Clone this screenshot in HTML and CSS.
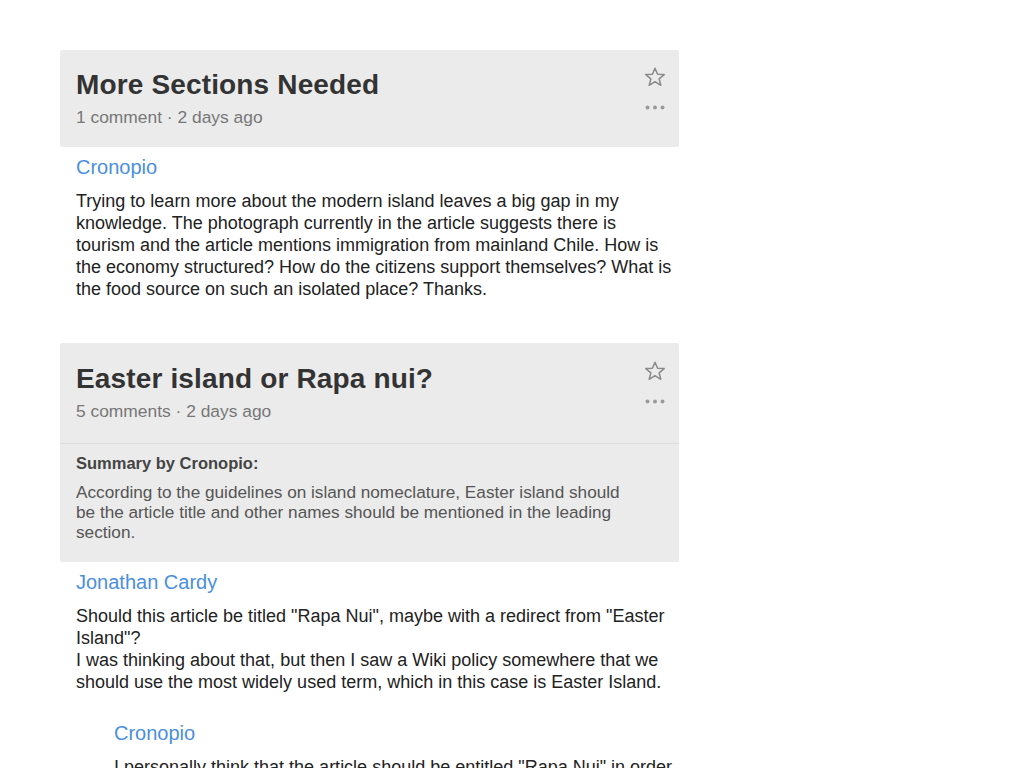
FILE: index.html
```html
<!DOCTYPE html>
<html>
<head>
<meta charset="utf-8">
<link rel="stylesheet" href="styles.css">
</head>
<body>
<main class="list">
  <section class="thread">
    <header class="thread-head">
      <div class="head-text">
        <h2 class="title">More Sections Needed</h2>
        <div class="meta">1 comment · 2 days ago</div>
      </div>
      <div class="actions">
        <svg class="star" width="22" height="20" viewBox="0 0 22 20"><path d="M11 1.2 L13.6 7.2 L20.2 7.6 L15.1 11.8 L16.8 18.3 L11 14.7 L5.2 18.3 L6.9 11.8 L1.8 7.6 L8.4 7.2 Z" fill="none" stroke="#8a8a8a" stroke-width="1.5" stroke-linejoin="round"/></svg>
        <svg class="dots" width="20" height="5" viewBox="0 0 20 5"><circle cx="2.5" cy="2.5" r="2" fill="#9a9a9a"/><circle cx="10" cy="2.5" r="2" fill="#9a9a9a"/><circle cx="17.5" cy="2.5" r="2" fill="#9a9a9a"/></svg>
      </div>
    </header>
    <article class="comment">
      <a class="author">Cronopio</a>
      <p class="body">Trying to learn more about the modern island leaves a big gap in my<br>knowledge. The photograph currently in the article suggests there is tourism and the article mentions immigration from mainland Chile. How is the economy structured? How do the citizens support themselves? What is the food source on such an isolated place? Thanks.</p>
    </article>
  </section>

  <section class="thread">
    <header class="thread-head has-summary">
      <div class="head-text">
        <h2 class="title">Easter island or Rapa nui?</h2>
        <div class="meta">5 comments · 2 days ago</div>
      </div>
      <div class="actions">
        <svg class="star" width="22" height="20" viewBox="0 0 22 20"><path d="M11 1.2 L13.6 7.2 L20.2 7.6 L15.1 11.8 L16.8 18.3 L11 14.7 L5.2 18.3 L6.9 11.8 L1.8 7.6 L8.4 7.2 Z" fill="none" stroke="#8a8a8a" stroke-width="1.5" stroke-linejoin="round"/></svg>
        <svg class="dots" width="20" height="5" viewBox="0 0 20 5"><circle cx="2.5" cy="2.5" r="2" fill="#9a9a9a"/><circle cx="10" cy="2.5" r="2" fill="#9a9a9a"/><circle cx="17.5" cy="2.5" r="2" fill="#9a9a9a"/></svg>
      </div>
    </header>
    <div class="summary">
      <div class="summary-label">Summary by Cronopio:</div>
      <p class="summary-text">According to the guidelines on island nomeclature, Easter island should be the article title and other names should be mentioned in the leading section.</p>
    </div>
    <article class="comment">
      <a class="author">Jonathan Cardy</a>
      <p class="body">Should this article be titled "Rapa Nui", maybe with a redirect from "Easter Island"?<br>I was thinking about that, but then I saw a Wiki policy somewhere that we should use the most widely used term, which in this case is Easter Island.</p>
      <article class="comment reply">
        <a class="author">Cronopio</a>
        <p class="body">I personally think that the article should be entitled "Rapa Nui" in order to respect the name given by the local people.</p>
      </article>
    </article>
  </section>
</main>
</body>
</html>
```

FILE: styles.css
```css
* { box-sizing: border-box; }
html, body { margin: 0; padding: 0; background: #fff; }
body {
  font-family: "Liberation Sans", Arial, Helvetica, sans-serif;
  color: #222;
  overflow: hidden;
}
.list {
  width: 619px;
  margin-left: 60px;
  padding-top: 50px;
}
.thread { margin-bottom: 43px; }
.thread-head {
  background: #ebebeb;
  border-radius: 2px;
  display: flex;
  justify-content: space-between;
  padding: 18px 13px 19px 16px;
}
.thread-head.has-summary {
  border-radius: 2px 2px 0 0;
  border-bottom: 1px solid #dcdcdc;
  padding-top: 19px;
  padding-bottom: 21px;
}
.title {
  margin: 0;
  font-size: 28px;
  font-weight: bold;
  line-height: 34px;
  color: #333;
  letter-spacing: 0.15px;
}
.meta {
  margin-top: 4px;
  font-size: 17.4px;
  line-height: 22px;
  color: #777;
}
.actions {
  display: flex;
  flex-direction: column;
  align-items: center;
}
.star { display: block; margin-top: -1px; }
.dots { display: block; margin-top: 18px; }
.summary {
  background: #ebebeb;
  border-radius: 0 0 2px 2px;
  padding: 9px 50px 20px 16px;
}
.summary-label {
  font-size: 16.5px;
  font-weight: bold;
  line-height: 20px;
  color: #444;
}
.summary-text {
  margin: 9px 0 0;
  font-size: 17.2px;
  line-height: 20px;
  color: #555;
}
.comment { padding: 8px 0 0 16px; }
.author {
  display: block;
  font-size: 20px;
  line-height: 24px;
  color: #4a8fe0;
  text-decoration: none;
}
.body {
  margin: 11px 0 0;
  font-size: 18px;
  line-height: 22px;
  color: #222;
}
.comment .reply {
  padding: 28px 0 0 38px;
}
```
